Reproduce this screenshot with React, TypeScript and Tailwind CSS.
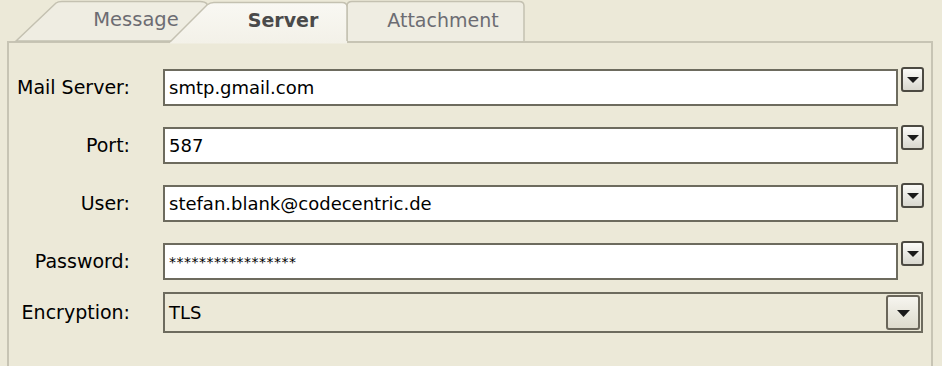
import React from "react";

const rows = [
  { label: "Mail Server:", value: "smtp.gmail.com" },
  { label: "Port:", value: "587" },
  { label: "User:", value: "stefan.blank@codecentric.de" },
  { label: "Password:", value: "*****************", secret: true },
];

function Triangle({ w = 13, h = 7 }: { w?: number; h?: number }) {
  return (
    <svg width={w} height={h} viewBox={`0 0 ${w} ${h}`}>
      <polygon points={`0,0 ${w},0 ${w / 2},${h}`} fill="#1a1a1a" />
    </svg>
  );
}

function SmallDrop() {
  return (
    <div className="ml-[3px] -mt-[2px] flex h-[25px] w-[23px] items-center justify-center rounded-[3px] border-2 border-[#4c4a42] bg-gradient-to-b from-[#fbfbf8] to-[#d9d8cf] pt-[1px]">
      <Triangle w={12} h={6} />
    </div>
  );
}

function TabStrip() {
  return (
    <div className="relative z-10 h-[41px]">
      <svg
        className="absolute left-0 top-0"
        width="942"
        height="44"
        viewBox="0 0 942 44"
      >
        <defs>
          <linearGradient id="sel" x1="0" y1="0" x2="0" y2="1">
            <stop offset="0" stopColor="#f9f8f3" />
            <stop offset="1" stopColor="#f3f1e8" />
          </linearGradient>
        </defs>
        {/* Message */}
        <path
          d="M16 41 L56 3 Q58 1.5 62 1.5 L200 1.5 Q205 1.5 207 4 L207 41 Z"
          fill="#efede2"
          stroke="#c4c1b1"
          strokeWidth="1.5"
        />
        {/* Attachment */}
        <path
          d="M347 41 L347 6 Q347 1.5 352 1.5 L519 1.5 Q524 1.5 524 6 L524 41"
          fill="#efede2"
          stroke="#c4c1b1"
          strokeWidth="1.5"
        />
        {/* Server (selected) */}
        <path
          d="M170 43.5 L170 42 L207 5 Q210 2.5 214 2.5 L342 2.5 Q347 2.5 347 7 L347 43.5 Z"
          fill="url(#sel)"
        />
        <path
          d="M170 42 L207 5 Q210 2.5 214 2.5 L342 2.5 Q347 2.5 347 7 L347 41"
          fill="none"
          stroke="#c4c1b1"
          strokeWidth="1.5"
        />
      </svg>
      <div className="relative flex h-full items-center pb-[1px] pl-[56px] font-['DejaVu_Sans',sans-serif] text-[19px]">
        <span className="w-[160px] text-center text-[19.5px] text-[#6c6c72]">Message</span>
        <span className="w-[134px] text-center font-bold text-[#4a4a4a]">
          Server
        </span>
        <span className="w-[186px] text-center text-[#6c6c72]">Attachment</span>
      </div>
    </div>
  );
}

export default function App() {
  return (
    <div className="flex h-[366px] w-[942px] flex-col overflow-hidden bg-[#ece9d8] font-['DejaVu_Sans',sans-serif] text-[18px] text-black">
      <TabStrip />
      <div className="ml-[7px] mr-[9px] flex-1 border-x-2 border-t-2 border-[#c7c4b4] pt-[26px]">
        <div className="flex flex-col gap-[21px]">
          {rows.map((r) => (
            <div key={r.label} className="flex items-start">
              <div className="flex h-[37px] w-[121px] items-center justify-end text-[19px]">
                {r.label}
              </div>
              <div className="ml-[33px] flex h-[37px] w-[735px] items-center border-2 border-[#6d6b5e] bg-white pl-[4px]">
                {r.secret ? (
                  <span className="pt-[1px] text-[14px] leading-none tracking-[0.5px]">
                    {r.value}
                  </span>
                ) : (
                  r.value
                )}
              </div>
              <SmallDrop />
            </div>
          ))}
        </div>
        <div className="mt-[12px] flex items-center">
          <div className="flex h-[41px] w-[121px] items-center justify-end text-[19px]">
            Encryption:
          </div>
          <div className="ml-[33px] flex h-[41px] w-[760px] items-center justify-between border-2 border-[#6d6b5e] bg-[#ece9d8] p-[1px] pl-[4px]">
            <span>TLS</span>
            <div className="flex h-full w-[34px] items-center justify-center rounded-[3px] border-2 border-[#6a665a] bg-gradient-to-b from-[#f6f5ef] to-[#dedbcd] pt-[2px]">
              <Triangle w={13} h={7} />
            </div>
          </div>
        </div>
      </div>
    </div>
  );
}
